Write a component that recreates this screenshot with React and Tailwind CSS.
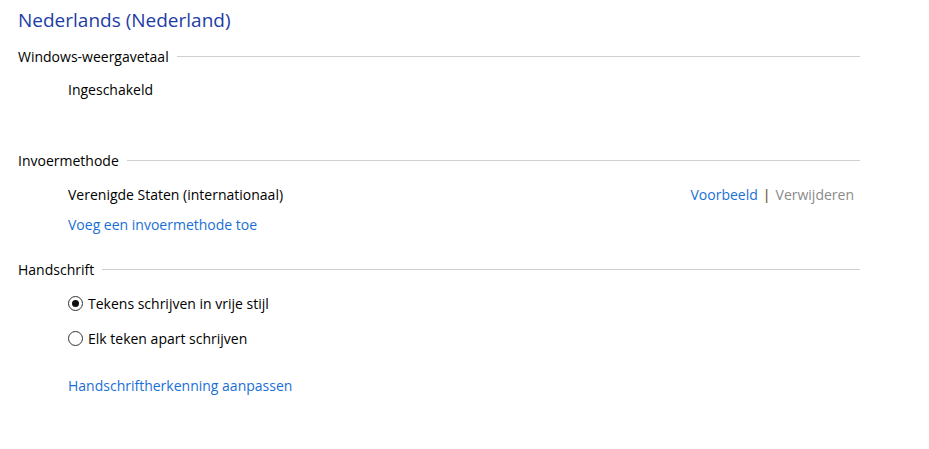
import React, { useState } from 'react';

const Heading = ({ children, className = '' }) => (
  <div className={`flex items-center h-[20px] ${className}`}>
    <span className="text-[14px] text-black">{children}</span>
    <div className="flex-1 h-px bg-[#cfcfcf] ml-[8px]" />
  </div>
);

const Radio = ({ checked, label, onClick, className = '' }) => (
  <div className={`flex items-center h-[20px] cursor-default ${className}`} onClick={onClick}>
    <span className="w-[15px] h-[15px] rounded-full border border-[#333] flex items-center justify-center bg-white">
      {checked && <span className="w-[7px] h-[7px] rounded-full bg-[#111]" />}
    </span>
    <span className="ml-[5px] text-[14px] text-black">{label}</span>
  </div>
);

const App = () => {
  const [mode, setMode] = useState('vrij');

  return (
    <div
      className="w-[929px] h-[449px] bg-white pl-[18px] overflow-hidden"
      style={{ fontFamily: '"Segoe UI", "Open Sans", "Noto Sans", sans-serif' }}
    >
      <div className="w-[842px]">
        <h1 className="h-[40px] flex items-center text-[19px] text-[#1e3ca6]">Nederlands (Nederland)</h1>

        <Heading className="mt-[6px]">Windows-weergavetaal</Heading>
        <div className="pl-[50px] mt-[13px] h-[20px] flex items-center text-[14px] text-black">Ingeschakeld</div>

        <Heading className="mt-[51px]">Invoermethode</Heading>
        <div className="pl-[50px] mt-[14px] h-[20px] flex items-center justify-between pr-[6px] text-[14px]">
          <span className="text-black">Verenigde Staten (internationaal)</span>
          <span>
            <a className="text-[#1a6fd6]">Voorbeeld</a>
            <span className="text-[#7a6040] font-semibold mx-[5px]">|</span>
            <span className="text-[#8a8a8a]">Verwijderen</span>
          </span>
        </div>
        <div className="pl-[50px] mt-[10px] h-[20px] flex items-center text-[14px]">
          <a className="text-[#1a6fd6]">Voeg een invoermethode toe</a>
        </div>

        <Heading className="mt-[25px]">Handschrift</Heading>
        <div className="pl-[50px]">
          <Radio className="mt-[14px]" checked={mode === 'vrij'} label="Tekens schrijven in vrije stijl" onClick={() => setMode('vrij')} />
          <Radio className="mt-[15px]" checked={mode === 'apart'} label="Elk teken apart schrijven" onClick={() => setMode('apart')} />
          <div className="mt-[27px] h-[20px] flex items-center text-[14px]">
            <a className="text-[#1a6fd6]">Handschriftherkenning aanpassen</a>
          </div>
        </div>
      </div>
    </div>
  );
};

export default App;
